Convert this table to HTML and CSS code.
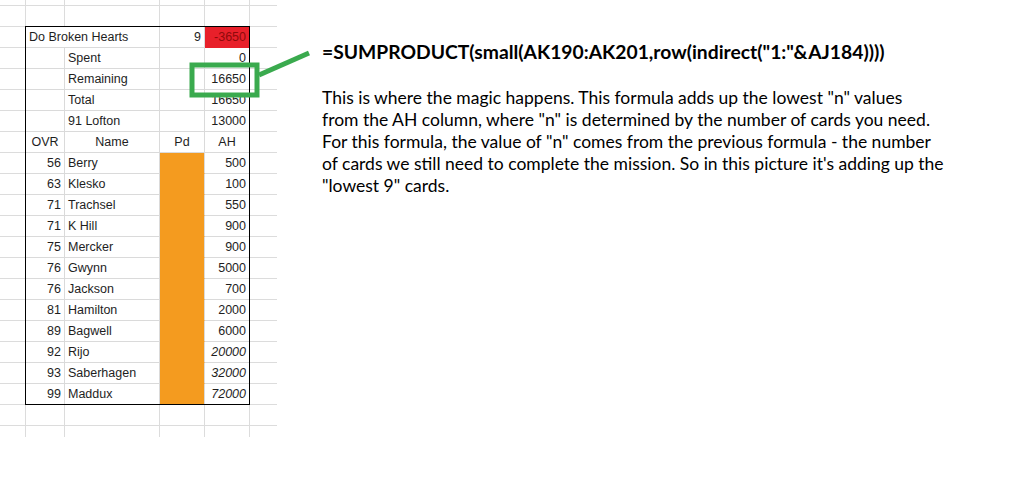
FILE: index.html
```html
<!DOCTYPE html>
<html lang="en">
<head>
<meta charset="utf-8">
<title>SUMPRODUCT explanation</title>
<link rel="stylesheet" href="styles.css">
</head>
<body>
<div class="page">
  <div class="sheet">
    <div class="tbl">
      <div class="c span2">Do Broken Hearts</div>
      <div class="c num">9</div>
      <div class="c num ah bad">-3650</div>

      <div class="c"></div><div class="c">Spent</div><div class="c"></div><div class="c num ah">0</div>
      <div class="c"></div><div class="c">Remaining</div><div class="c"></div><div class="c num ah">16650</div>
      <div class="c"></div><div class="c">Total</div><div class="c"></div><div class="c num ah">16650</div>
      <div class="c"></div><div class="c">91 Lofton</div><div class="c"></div><div class="c num ah">13000</div>

      <div class="c ctr">OVR</div><div class="c ctr">Name</div><div class="c ctr">Pd</div><div class="c ctr ah">AH</div>

      <div class="c num">56</div><div class="c">Berry</div><div class="c pd"></div><div class="c num ah">500</div>
      <div class="c num">63</div><div class="c">Klesko</div><div class="c pd"></div><div class="c num ah">100</div>
      <div class="c num">71</div><div class="c">Trachsel</div><div class="c pd"></div><div class="c num ah">550</div>
      <div class="c num">71</div><div class="c">K Hill</div><div class="c pd"></div><div class="c num ah">900</div>
      <div class="c num">75</div><div class="c">Mercker</div><div class="c pd"></div><div class="c num ah">900</div>
      <div class="c num">76</div><div class="c">Gwynn</div><div class="c pd"></div><div class="c num ah">5000</div>
      <div class="c num">76</div><div class="c">Jackson</div><div class="c pd"></div><div class="c num ah">700</div>
      <div class="c num">81</div><div class="c">Hamilton</div><div class="c pd"></div><div class="c num ah">2000</div>
      <div class="c num">89</div><div class="c">Bagwell</div><div class="c pd"></div><div class="c num ah">6000</div>
      <div class="c num">92</div><div class="c">Rijo</div><div class="c pd"></div><div class="c num ah it">20000</div>
      <div class="c num">93</div><div class="c">Saberhagen</div><div class="c pd"></div><div class="c num ah it">32000</div>
      <div class="c num last">99</div><div class="c last">Maddux</div><div class="c pd last"></div><div class="c num ah it last">72000</div>
    </div>
  </div>

  <div class="notes">
    <p class="formula">=SUMPRODUCT(small(AK190:AK201,row(indirect("1:"&amp;AJ184))))</p>
    <p class="desc">This is where the magic happens. This formula adds up the lowest "n" values<br>from the AH column, where "n" is determined by the number of cards you need.<br>For this formula, the value of "n" comes from the previous formula - the number<br>of cards we still need to complete the mission. So in this picture it's adding up the<br>"lowest 9" cards.</p>
  </div>

  <svg class="callout" width="330" height="120" viewBox="0 0 330 120" aria-hidden="true">
    <rect x="192" y="65" width="65" height="30" fill="none" stroke="#3aaa4e" stroke-width="5"/>
    <line x1="259" y1="75" x2="309" y2="53" stroke="#3aaa4e" stroke-width="5"/>
  </svg>
</div>
</body>
</html>
```

FILE: styles.css
```css
html, body {
  margin: 0;
  padding: 0;
  background: #ffffff;
}

.page {
  position: relative;
  display: flex;
  align-items: flex-start;
  width: 1033px;
  height: 483px;
}

.sheet {
  width: 277px;
  height: 437px;
  box-sizing: border-box;
  padding: 26px 0 0 25px;
  flex: none;
  background-color: #fff;
  background-image:
    linear-gradient(#dcdcdc, #dcdcdc),
    linear-gradient(#dcdcdc, #dcdcdc),
    linear-gradient(#dcdcdc, #dcdcdc),
    linear-gradient(#dcdcdc, #dcdcdc),
    linear-gradient(#dcdcdc, #dcdcdc),
    linear-gradient(to bottom, #dcdcdc 0, #dcdcdc 1px, transparent 1px);
  background-size:
    1px 100%,
    1px 100%,
    1px 100%,
    1px 100%,
    1px 100%,
    100% 21px;
  background-position:
    25px 0,
    64px 0,
    159px 0,
    204px 0,
    249px 0,
    0 5px;
  background-repeat:
    no-repeat,
    no-repeat,
    no-repeat,
    no-repeat,
    no-repeat,
    repeat-y;
}

.tbl {
  width: 225px;
  box-sizing: border-box;
  border: 1px solid #000;
  background: #fff;
  display: grid;
  grid-template-columns: 39px 95px 45px 44px;
  grid-template-rows: repeat(17, 21px) 20px;
  font-family: "Liberation Sans", Arial, sans-serif;
  font-size: 12.5px;
  color: #1e1e1e;
}

.c {
  box-sizing: border-box;
  border-right: 1px solid #dadada;
  border-bottom: 1px solid #dadada;
  padding: 0 3px;
  line-height: 20px;
  white-space: nowrap;
}

.span2 {
  grid-column: span 2;
}

.num {
  text-align: right;
}

.ctr {
  text-align: center;
}

.ah {
  border-right: none;
}

.last {
  border-bottom: none;
}

.it {
  font-style: italic;
}

.bad {
  background: #e8202a;
  color: #8f0a0a;
  border-bottom-color: #e8202a;
}

.pd {
  background: #f49b1f;
  border-bottom-color: #f49b1f;
}

.notes {
  padding: 39px 0 0 45px;
  font-family: Lato, "Noto Sans", sans-serif;
  color: #000;
}

.formula {
  margin: 0;
  font-weight: 700;
  font-size: 19.3px;
  line-height: 26px;
}

.desc {
  margin: 22px 0 0;
  font-size: 17.5px;
  line-height: 22px;
}

.callout {
  position: absolute;
  left: 0;
  top: 0;
  pointer-events: none;
}
```
